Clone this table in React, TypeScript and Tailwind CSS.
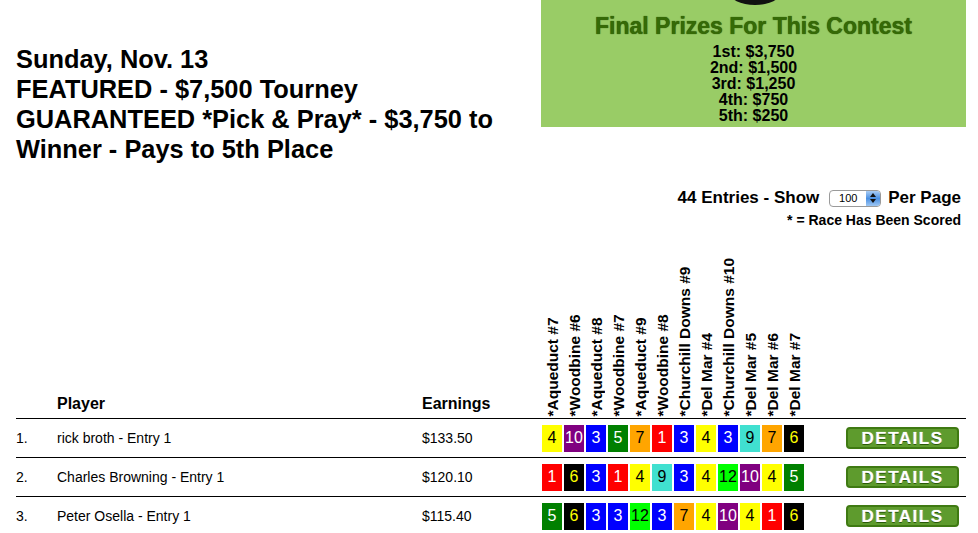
import React from "react";

const races = [
  "*Aqueduct #7",
  "*Woodbine #6",
  "*Aqueduct #8",
  "*Woodbine #7",
  "*Aqueduct #9",
  "*Woodbine #8",
  "*Churchill Downs #9",
  "*Del Mar #4",
  "*Churchill Downs #10",
  "*Del Mar #5",
  "*Del Mar #6",
  "*Del Mar #7",
];

const entries = [
  { rank: 1, name: "rick broth - Entry 1", earnings: "$133.50", picks: [4, 10, 3, 5, 7, 1, 3, 4, 3, 9, 7, 6] },
  { rank: 2, name: "Charles Browning - Entry 1", earnings: "$120.10", picks: [1, 6, 3, 1, 4, 9, 3, 4, 12, 10, 4, 5] },
  { rank: 3, name: "Peter Osella - Entry 1", earnings: "$115.40", picks: [5, 6, 3, 3, 12, 3, 7, 4, 10, 4, 1, 6] },
];

// saddle cloth colours
const cloth: Record<number, string> = {
  1: "bg-[#ff0000] text-white",
  3: "bg-[#0000ff] text-white",
  4: "bg-[#ffff00] text-black",
  5: "bg-[#008000] text-white",
  6: "bg-black text-[#ffff00]",
  7: "bg-[#ffa500] text-black",
  9: "bg-[#40e0d0] text-black",
  10: "bg-[#800080] text-white",
  12: "bg-[#00ff00] text-black",
};

const prizes = ["1st: $3,750", "2nd: $1,500", "3rd: $1,250", "4th: $750", "5th: $250"];

const PerPageSelect = () => (
  <span className="inline-flex items-center h-[17px] w-[52px] border border-[#9a9a9a] rounded-[4px] overflow-hidden bg-white ml-[10px] mr-[7px] align-middle">
    <span className="flex-1 text-center text-[11px] font-normal leading-none text-black">100</span>
    <span className="w-[14px] h-full flex flex-col items-center justify-center gap-[2px] bg-gradient-to-b from-[#a9cdf5] via-[#4a90e2] to-[#9ec7f3]">
      <svg width="6" height="4" viewBox="0 0 6 4">
        <path d="M0 4 L3 0 L6 4 Z" fill="#111" />
      </svg>
      <svg width="6" height="4" viewBox="0 0 6 4">
        <path d="M0 0 L3 4 L6 0 Z" fill="#111" />
      </svg>
    </span>
  </span>
);

const App = () => {
  return (
    <div className="w-[978px] h-[533px] overflow-hidden bg-white text-black font-['Liberation_Sans',Arial,sans-serif]">
      {/* top: headline + prizes */}
      <div className="flex pl-4 pr-3">
        <div className="w-[525px] pt-[44px] text-[25.4px] font-bold leading-[30px]">
          <div>Sunday, Nov. 13</div>
          <div>FEATURED - $7,500 Tourney</div>
          <div className="w-[510px]">GUARANTEED *Pick &amp; Pray* - $3,750 to Winner - Pays to 5th Place</div>
        </div>
        <div className="w-[425px] h-[127px] bg-[#99cc66] flex flex-col items-center">
          <svg width="52" height="5" viewBox="0 0 52 5" className="ml-[2px]">
            <ellipse cx="26" cy="-8" rx="26" ry="13" fill="#111" />
          </svg>
          <div className="mt-[8px] text-[23px] font-bold leading-[26px] text-[#356a06] [text-shadow:0_0_1px_#1d3d00]">
            Final Prizes For This Contest
          </div>
          <div className="mt-[5px] text-[16px] font-bold leading-[16px] text-center">
            {prizes.map((p) => (
              <div key={p}>{p}</div>
            ))}
          </div>
        </div>
      </div>

      {/* entries count */}
      <div className="flex flex-col items-end pr-[17px] mt-[24px]">
        <div className="flex items-center text-[17px] font-bold leading-[20px]">
          <span>44 Entries - Show</span>
          <PerPageSelect />
          <span>Per Page</span>
        </div>
        <div className="text-[14px] font-bold leading-[18px] mt-[3px]">* = Race Has Been Scored</div>
      </div>

      {/* table */}
      <div className="ml-4 mr-3">
        <div className="flex items-end h-[190px] border-b border-black">
          <div className="w-[41px]" />
          <div className="w-[365px] text-[16px] font-bold pb-[2px]">Player</div>
          <div className="w-[120px] text-[16px] font-bold pb-[2px]">Earnings</div>
          <div className="w-[304px] flex pb-[2px]">
            {races.map((r) => (
              <div key={r} className="w-[22px] flex justify-center">
                <span className="[writing-mode:vertical-rl] rotate-180 whitespace-nowrap text-[15.5px] font-bold leading-[20px]">
                  {r}
                </span>
              </div>
            ))}
          </div>
        </div>
        {entries.map((e) => (
          <div key={e.rank} className="flex items-center h-[39px] border-b border-black text-[14px]">
            <div className="w-[41px]">{e.rank}.</div>
            <div className="w-[365px]">{e.name}</div>
            <div className="w-[120px]">{e.earnings}</div>
            <div className="w-[304px] flex gap-[2px]">
              {e.picks.map((n, i) => (
                <div
                  key={i}
                  className={`w-[20px] h-[27px] flex items-center justify-center text-[16px] leading-none ${cloth[n]}`}
                >
                  {n}
                </div>
              ))}
            </div>
            <button
              type="button"
              className="w-[113px] h-[22px] rounded-[4px] border-2 border-[#3f7a12] bg-[#5e9b2d] text-white text-[17px] font-bold tracking-[1.5px] leading-none flex items-center justify-center [text-shadow:0_1px_0_#2a5a08,0_0_1px_#fff]"
            >
              DETAILS
            </button>
          </div>
        ))}
      </div>
    </div>
  );
};

export default App;
